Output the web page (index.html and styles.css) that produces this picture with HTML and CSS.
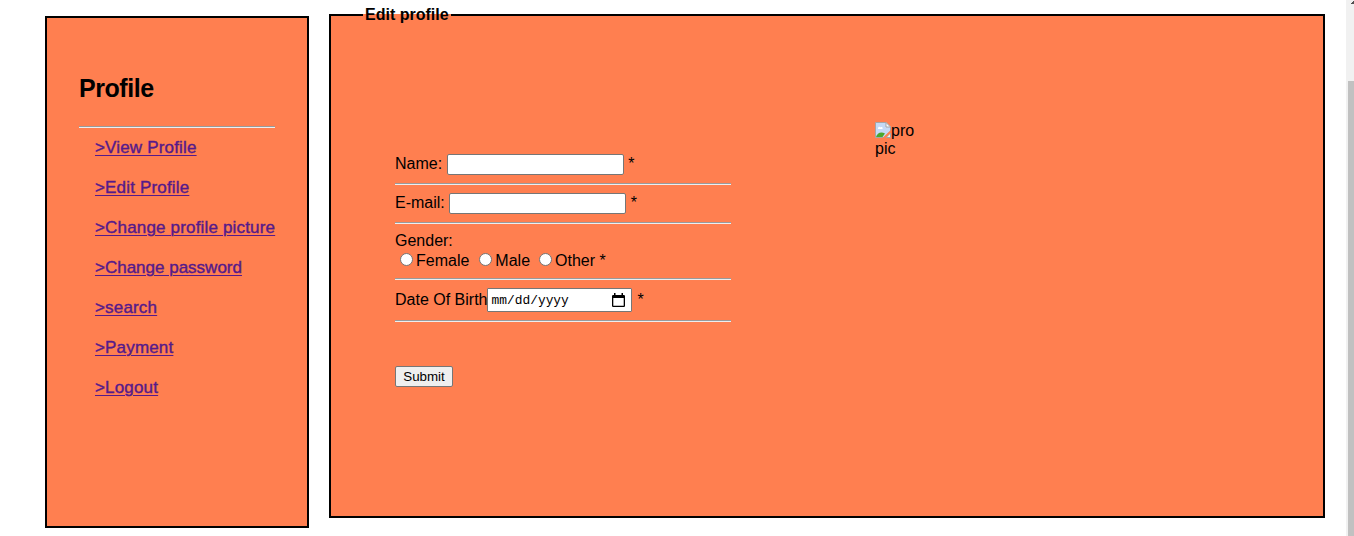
FILE: index.html
```html
<!DOCTYPE html>
<html lang="en">
<head>
<meta charset="utf-8">
<title>Edit profile</title>
<link rel="stylesheet" href="styles.css">
</head>
<body>
<div class="page">
  <aside class="sidebar">
    <h2 class="title">Profile</h2>
    <hr class="rule">
    <nav class="menu">
      <a class="link" href="#">&gt;View Profile</a>
      <a class="link" href="#">&gt;Edit Profile</a>
      <a class="link" href="#">&gt;Change profile picture</a>
      <a class="link password" href="#">&gt;Change password</a>
      <a class="link" href="#">&gt;search</a>
      <a class="link" href="#">&gt;Payment</a>
      <a class="link" href="#">&gt;Logout</a>
    </nav>
  </aside>
  <fieldset class="panel">
    <legend class="legend">Edit profile</legend>
    <div class="content">
      <form class="form">
        <label class="row">Name: <input class="field" type="text"><span class="star">*</span></label>
        <hr class="rule">
        <label class="row">E-mail: <input class="field email" type="text"><span class="star wide">*</span></label>
        <hr class="rule">
        <div class="gender">
          <div class="line">Gender:</div>
          <div class="line options">
            <span class="radio"></span><span class="option female">Female</span>
            <span class="radio"></span><span class="option male">Male</span>
            <span class="radio"></span><span class="option">Other *</span>
          </div>
        </div>
        <hr class="rule">
        <div class="row date-row">Date Of Birth<span class="date"><span class="mask">mm/dd/yyyy</span>
          <svg class="calendar" width="13" height="15" viewBox="0 0 13 15"><path d="M2 0h1.500v2h6V0H11v2h1.200l.8.8v10.400l-.8.8H.8l-.8-.8V2.800L.8 2H2zM1.300 5v7.700h10.400V5z" fill="#000"/></svg></span><span class="star wide">*</span></div>
        <hr class="rule">
        <button class="submit" type="button">Submit</button>
      </form>
      <div class="picture">
        <svg class="broken" width="16" height="16" viewBox="0 0 16 16">
          <path d="M.5.500H11L15.500 5v4L9 15.500H.5z" fill="#c5d9f5" stroke="#a5a5a5"/>
          <path d="M3 6.500c0-2 2-2 2.500-1C7 4.500 8 5.500 7.500 7H3z" fill="#fff"/>
          <path d="M1 15c1-4 5-6 9-3.500L7.500 15z" fill="#4ca72e"/>
          <path d="M11 .5V5h4.500z" fill="#fff" stroke="#a5a5a5"/>
          <path d="M11 15.500l4.500-4.500v4.500z" fill="#eee" stroke="#a5a5a5"/>
          <path d="M7.500 16L16 8v2.500L10.500 16z" fill="#ff7f50"/>
        </svg>pro<br>pic
      </div>
    </div>
  </fieldset>
  <div class="scrollbar">
    <svg class="arrow" width="3" height="3" viewBox="0 0 3 3"><path d="M0 3V2h1V1h1V0h1v3z" fill="#505050"/></svg>
    <div class="thumb"></div>
  </div>
</div>
</body>
</html>
```
FILE: styles.css
```css
* { box-sizing: border-box; }

body {
  margin: 0;
  background: #fff;
  color: #000;
  font: 16px/18px "Liberation Sans", Arial, sans-serif;
  overflow: hidden;
}

.page {
  display: flex;
  align-items: flex-start;
  height: 536px;
  padding-left: 45px;
}

.sidebar {
  width: 264px;
  height: 512px;
  margin-top: 16px;
  padding: 55px 32px 0;
  background: coral;
  border: 2px solid #000;
}

.title {
  margin: 0 0 22px;
  font-size: 25px;
  line-height: 31px;
  letter-spacing: -0.45px;
}

.rule {
  width: 100%;
  height: 2px;
  margin: 0;
  border: 0;
  border-top: 1px solid #9a9a9a;
  border-bottom: 1px solid #eee;
}

.menu {
  display: flex;
  flex-direction: column;
  align-items: flex-start;
  gap: 20px;
  padding: 10px 0 0 16px;
}

.link {
  color: #551a8b;
  font-size: 17px;
  line-height: 20px;
  letter-spacing: 0.17px;
  white-space: nowrap;
  -webkit-text-stroke: 0.4px #551a8b;
  text-underline-offset: 2px;
  text-decoration-thickness: 1px;
}

.password { letter-spacing: 0; }

.panel {
  width: 996px;
  height: 512px;
  min-width: 0;
  margin: 6px 0 0 20px;
  padding: 0 32px;
  background: coral;
  border: 2px solid #000;
}

.legend {
  padding: 0 2px;
  font-weight: bold;
  line-height: 18px;
}

.content {
  display: flex;
  padding: 98px 0 0 32px;
}

.form {
  display: flex;
  flex-direction: column;
  gap: 8px;
  width: 336px;
  margin-top: 32px;
}

.row {
  display: flex;
  height: 21px;
  line-height: 19px;
  white-space: nowrap;
}

.field {
  width: 177px;
  height: 21px;
  margin: 0 0 0 5px;
  padding: 1px 2px;
  background: #fff;
  border: 1px solid #767676;
  border-radius: 2px;
}

.email { margin-left: 4px; }

.star { margin-left: 4px; }
.wide { margin-left: 5px; }

.gender {
  height: 38px;
  padding-bottom: 1px;
}

.line {
  height: 19px;
  line-height: 18px;
}

.options {
  display: flex;
  line-height: 20px;
}

.radio {
  width: 13px;
  height: 13px;
  margin: 2px 3px 0 5px;
  background: #fff;
  border: 1px solid #767676;
  border-radius: 50%;
}

.female { margin-right: 5px; }
.male { margin-right: 4px; }

.date-row {
  height: 24px;
  line-height: 23px;
}

.date {
  display: flex;
  align-items: center;
  justify-content: space-between;
  width: 145px;
  height: 24px;
  padding: 0 5px 0 3px;
  background: #fff;
  border: 1px solid #767676;
  border-radius: 1px;
}

.date .calendar { margin-right: 1px; }

.mask {
  padding-top: 2px;
  font: 12.9px/20px "Liberation Mono", monospace;
}

.submit {
  width: 58px;
  height: 21px;
  margin: 36px 0 0;
  padding: 0;
  background: #efefef;
  border: 1px solid #767676;
  border-radius: 2px;
  color: #000;
  font: 13.333px/18px "Liberation Sans", Arial, sans-serif;
}

.picture {
  width: 60px;
  margin-left: 144px;
}

.broken {
  float: left;
}

.scrollbar {
  width: 8px;
  height: 536px;
  margin-left: 21px;
  padding: 1px 0 0 2px;
  background: #f1f1f1;
}

.arrow {
  display: block;
  margin-left: 3px;
}

.thumb {
  height: 455px;
  margin-top: 77px;
  background: #c1c1c1;
}
```
